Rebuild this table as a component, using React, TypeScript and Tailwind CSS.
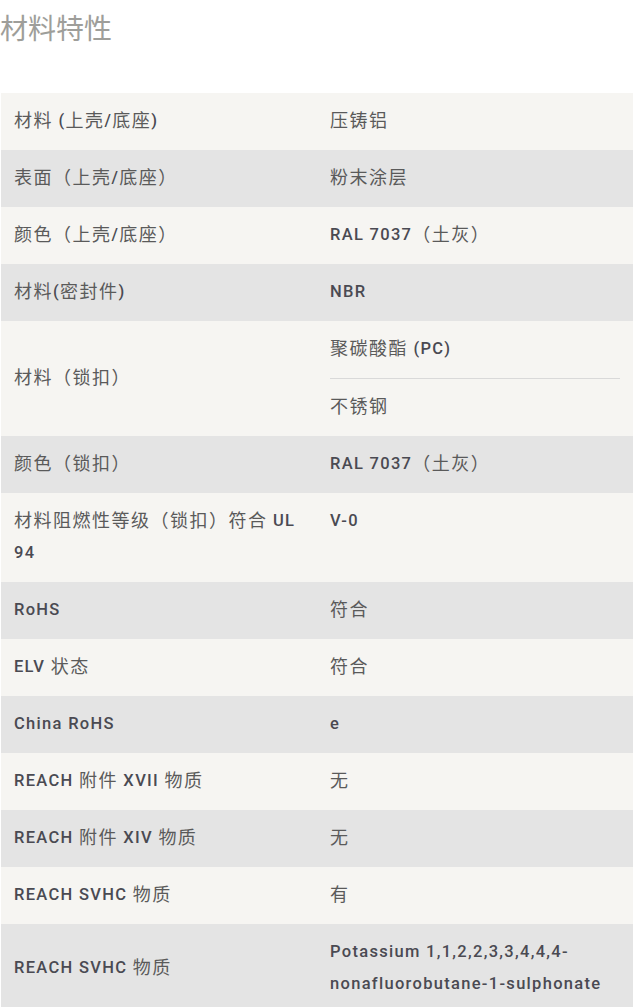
import React from "react";

const CJK = /([\u2E80-\u9FFF\uFF00-\uFFEF\u3000-\u303F]+)/;

function Txt({ s }: { s: string }) {
  const parts = s.split(CJK).filter((p) => p.length > 0);
  return (
    <>
      {parts.map((p, i) =>
        CJK.test(p) ? (
          <span key={i} className="align-top font-normal text-[18px] leading-8 text-[#5a5a5a] tracking-[1.5px]">
            {p}
          </span>
        ) : (
          <span key={i} className="align-top font-medium text-[16.5px] leading-8 text-[#4a4a52] tracking-[1.3px]">
            {p}
          </span>
        )
      )}
    </>
  );
}

type Row = { k: string; v: string[] };

const rows: Row[] = [
  { k: "材料 (上壳/底座)", v: ["压铸铝"] },
  { k: "表面（上壳/底座）", v: ["粉末涂层"] },
  { k: "颜色（上壳/底座）", v: ["RAL 7037（土灰）"] },
  { k: "材料(密封件)", v: ["NBR"] },
  { k: "材料（锁扣）", v: ["聚碳酸酯 (PC)", "不锈钢"] },
  { k: "颜色（锁扣）", v: ["RAL 7037（土灰）"] },
  { k: "材料阻燃性等级（锁扣）符合 UL 94", v: ["V-0"] },
  { k: "RoHS", v: ["符合"] },
  { k: "ELV 状态", v: ["符合"] },
  { k: "China RoHS", v: ["e"] },
  { k: "REACH 附件 XVII 物质", v: ["无"] },
  { k: "REACH 附件 XIV 物质", v: ["无"] },
  { k: "REACH SVHC 物质", v: ["有"] },
  { k: "REACH SVHC 物质", v: ["Potassium 1,1,2,2,3,3,4,4,4-nonafluorobutane-1-sulphonate"] },
];

export default function App() {
  return (
    <div className="w-[633px] min-h-[1007px] bg-white font-['Roboto','Noto_Sans_CJK_SC',sans-serif]">
      <h2 className="pt-[10px] text-[28px] leading-[34px] font-normal text-[#9e9e9a] font-['Noto_Sans_CJK_SC',sans-serif]">
        材料特性
      </h2>
      <div className="mt-[49px] ml-[1px] w-[632px] text-[16px] leading-8">
        {rows.map((r, i) => (
          <div
            key={i}
            className={`grid grid-cols-2 ${i % 2 === 0 ? "bg-[#f6f5f2]" : "bg-[#e4e4e4]"}`}
          >
            <div className="px-[13px] pt-3 pb-[13px] flex items-center">
              <div className="leading-8">
                <Txt s={r.k} />
              </div>
            </div>
            {r.v.length === 1 ? (
              <div className="px-[13px] pt-3 pb-[13px] break-words leading-8">
                <Txt s={r.v[0]} />
              </div>
            ) : (
              <div className="px-[13px]">
                {r.v.map((v, j) => (
                  <div
                    key={j}
                    className={`pt-3 pb-[13px] leading-8 ${j > 0 ? "border-t border-[#d9d9d9]" : ""}`}
                  >
                    <Txt s={v} />
                  </div>
                ))}
              </div>
            )}
          </div>
        ))}
      </div>
    </div>
  );
}
